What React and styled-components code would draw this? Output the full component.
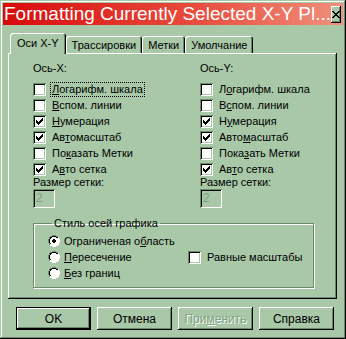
import React from "react";
import styled, { createGlobalStyle } from "styled-components";

const face = "#a8c8a8";
const shadow = "#6a8a6a";

const Global = createGlobalStyle`
  html, body { margin: 0; padding: 0; background: ${face}; }
  body { font-family: "Liberation Sans", Arial, sans-serif; font-size: 11px; color: #000; }
`;

const Window = styled.div`
  width: 346px;
  height: 339px;
  box-sizing: border-box;
  padding: 3px;
  background: ${face};
  box-shadow: inset -1px -1px #000, inset 1px 1px ${face}, inset -2px -2px ${shadow}, inset 2px 2px #fff;
  display: flex;
  flex-direction: column;
`;

const TitleBar = styled.div`
  height: 22px;
  background: linear-gradient(90deg, #d80a0a 0%, #e84a3c 55%, #f0907c 100%);
  display: flex;
  align-items: center;
  justify-content: space-between;
  padding: 0 2px 0 1px;
`;

const Title = styled.div`
  color: #fff;
  font-size: 19px;
  line-height: 22px;
  white-space: nowrap;
`;

const CloseButton = styled.div`
  width: 18px;
  height: 17px;
  box-sizing: border-box;
  background: ${face};
  box-shadow: inset -1px -1px #000, inset 1px 1px #fff, inset -2px -2px ${shadow};
  display: flex;
  align-items: center;
  justify-content: center;
`;

const Body = styled.div`
  flex: 1;
  display: flex;
  flex-direction: column;
  padding: 8px 6px 0 5px;
`;

const TabRow = styled.div`
  display: flex;
  align-items: flex-end;
  height: 20px;
  padding-left: 2px;
  position: relative;
  z-index: 1;
`;

const Tab = styled.div`
  box-sizing: border-box;
  height: ${p => (p.$active ? 21 : 17)}px;
  margin-bottom: ${p => (p.$active ? -1 : 0)}px;
  padding: 0 ${p => (p.$active ? 7 : 6)}px ${p => (p.$active ? 2 : 0)}px;
  display: flex;
  align-items: center;
  background: ${face};
  border-top-left-radius: 3px;
  border-top-right-radius: 3px;
  box-shadow: inset 1px 1px #fff, inset -1px 0 #000, inset -2px 0 ${shadow};
  white-space: nowrap;
`;

const Panel = styled.div`
  height: 246px;
  box-sizing: border-box;
  padding: 9px 0 0 25px;
  background: ${face};
  box-shadow: inset -1px -1px #000, inset 1px 1px #fff, inset -2px -2px ${shadow};
`;

const Columns = styled.div`
  display: grid;
  grid-template-columns: 167px 1fr;
`;

const Column = styled.div`
  display: flex;
  flex-direction: column;
`;

const Caption = styled.div`
  line-height: 13px;
  height: 13px;
  margin-bottom: ${p => p.$gap || 0}px;
  margin-top: ${p => p.$top || 0}px;
`;

const Row = styled.div`
  display: flex;
  align-items: center;
  height: 16px;
  grid-column: ${p => p.$col || 1};
  grid-row: ${p => p.$row || "auto"};
`;

const Box = styled.div`
  width: 13px;
  height: 13px;
  box-sizing: border-box;
  background: #fff;
  box-shadow: inset 1px 1px ${shadow}, inset -1px -1px #fff, inset 2px 2px #000, inset -2px -2px ${face};
  display: flex;
  align-items: center;
  justify-content: center;
  flex-shrink: 0;
`;

const Label = styled.span`
  margin-left: ${p => p.$ml || 5}px;
  line-height: 13px;
  padding: 0 1px;
  outline: ${p => (p.$focus ? "1px dotted #000" : "none")};
  white-space: nowrap;
`;

const U = styled.span`
  text-decoration: underline;
  text-underline-offset: 1px;
`;

const Spin = styled.div`
  width: 22px;
  height: 19px;
  box-sizing: border-box;
  margin-top: 0;
  padding: 2px 0 0 3px;
  color: #7fa07f;
  font-size: 12px;
  line-height: 15px;
  box-shadow: inset 1px 1px ${shadow}, inset -1px -1px #fff, inset 2px 2px #000, inset -2px -2px ${face};
`;

const Group = styled.fieldset`
  margin: 9px 0 0 0;
  width: 281px;
  height: 71px;
  box-sizing: border-box;
  padding: 3px 0 0 14px;
  border: 1px solid ${shadow};
  box-shadow: inset 1px 1px #fff, 1px 1px #fff;
`;

const Legend = styled.legend`
  padding: 0 2px;
  margin-left: 4px;
  line-height: 13px;
`;

const GroupGrid = styled.div`
  display: grid;
  grid-template-columns: 140px 1fr;
  grid-template-rows: 16px 16px 16px;
`;

const ButtonRow = styled.div`
  display: flex;
  justify-content: flex-end;
  gap: 6px;
  padding: 8px 3px 0 0;
`;

const Button = styled.div`
  width: 75px;
  height: 23px;
  box-sizing: border-box;
  display: flex;
  align-items: center;
  justify-content: center;
  font-size: 12px;
  color: ${p => (p.$disabled ? "#80a080" : "#000")};
  text-shadow: ${p => (p.$disabled ? "1px 1px #fff" : "none")};
  box-shadow: ${p =>
    p.$default
      ? `inset 0 0 0 1px #000, inset -2px -2px #000, inset 2px 2px #fff, inset -3px -3px ${shadow}`
      : `inset -1px -1px #000, inset 1px 1px #fff, inset -2px -2px ${shadow}`};
`;

const Check = () => (
  <svg width="7" height="7" viewBox="0 0 7 7" shapeRendering="crispEdges">
    <path d="M0 2h1v1h1v1h1V3h1V2h1V1h1V0h1v3H6v1H5v1H4v1H3v1H2V6H1V5H0z" fill="#000" />
  </svg>
);

const Radio = ({ on }) => (
  <svg width="12" height="12" viewBox="0 0 12 12" shapeRendering="crispEdges">
    <path d="M4 0h4v1h2v1h1v2h1v4h-1v2h-1v1H8v1H4v-1H2v-1H1V8H0V4h1V2h1V1h2z" fill="#fff" />
    <path d="M4 0h4v1H4zM2 1h2v1H2zM8 1h2v1H8zM1 2h1v2H1zM0 4h1v4H0zM1 8h1v2H1z" fill={shadow} />
    <path d="M4 1h4v1H4zM2 2h2v1H2zM8 2h2v1H8zM2 3h1v1H2zM1 4h1v4H1zM2 8h1v1H2z" fill="#000" />
    <path d="M10 2h1v2h-1zM11 4h1v4h-1zM10 8h1v2h-1zM8 10h2v1H8zM4 11h4v1H4zM2 10h2v1H2z" fill="#fff" />
    {on && <path d="M5 4h2v1h1v2H7v1H5V7H4V5h1z" fill="#000" />}
  </svg>
);

const CheckRow = ({ checked, focus, children, col, row }) => (
  <Row $col={col} $row={row}>
    <Box>{checked && <Check />}</Box>
    <Label $focus={focus}>{children}</Label>
  </Row>
);

const RadioRow = ({ on, row, children }) => (
  <Row $col={1} $row={row}>
    <Radio on={on} />
    <Label $ml={3}>{children}</Label>
  </Row>
);

const AxisColumn = ({ title, rows }) => (
  <Column>
    <Caption $gap={6}>{title}</Caption>
    {rows.map((r, i) => (
      <CheckRow key={i} checked={r.checked} focus={r.focus}>
        {r.pre}
        <U>{r.u}</U>
        {r.post}
      </CheckRow>
    ))}
    <Caption $top={-1}>Размер сетки:</Caption>
    <Spin>2</Spin>
  </Column>
);

const xRows = [
  { pre: "", u: "Л", post: "огарифм. шкала", focus: true },
  { pre: "", u: "В", post: "спом. линии" },
  { pre: "", u: "Н", post: "умерация", checked: true },
  { pre: "Ав", u: "т", post: "омасштаб", checked: true },
  { pre: "По", u: "к", post: "азать Метки" },
  { pre: "А", u: "в", post: "то сетка", checked: true },
];

const yRows = [
  { pre: "Л", u: "о", post: "гарифм. шкала" },
  { pre: "В", u: "с", post: "пом. линии" },
  { pre: "Н", u: "у", post: "мерация", checked: true },
  { pre: "Авто", u: "м", post: "асштаб", checked: true },
  { pre: "Пока", u: "з", post: "ать Метки" },
  { pre: "Ав", u: "т", post: "о сетка", checked: true },
];

export default function App() {
  return (
    <>
      <Global />
      <Window>
        <TitleBar>
          <Title>Formatting Currently Selected X-Y Pl...</Title>
          <CloseButton>
            <svg width="8" height="7" viewBox="0 0 8 7" shapeRendering="crispEdges">
              <path d="M0 0h2v1h1v1h2V1h1V0h2v1H7v1H6v1H5v1h1v1h1v1h1v1H6V6H5V5H3v1H2v1H0V6h1V5h1V4h1V3H2V2H1V1H0z" fill="#000" />
            </svg>
          </CloseButton>
        </TitleBar>
        <Body>
          <TabRow>
            <Tab $active>Оси X-Y</Tab>
            <Tab>Трассировки</Tab>
            <Tab>Метки</Tab>
            <Tab>Умолчание</Tab>
          </TabRow>
          <Panel>
            <Columns>
              <AxisColumn title="Ось-X:" rows={xRows} />
              <AxisColumn title="Ось-Y:" rows={yRows} />
            </Columns>
            <Group>
              <Legend>Стиль осей графика</Legend>
              <GroupGrid>
                <RadioRow on row={1}>Ограниченая о<U>б</U>ласть</RadioRow>
                <RadioRow row={2}><U>П</U>ересечение</RadioRow>
                <RadioRow row={3}><U>Б</U>ез границ</RadioRow>
                <CheckRow col={2} row={2}>Равные масштабы</CheckRow>
              </GroupGrid>
            </Group>
          </Panel>
          <ButtonRow>
            <Button $default>OK</Button>
            <Button>Отмена</Button>
            <Button $disabled>При<U>м</U>енить</Button>
            <Button>Справка</Button>
          </ButtonRow>
        </Body>
      </Window>
    </>
  );
}
